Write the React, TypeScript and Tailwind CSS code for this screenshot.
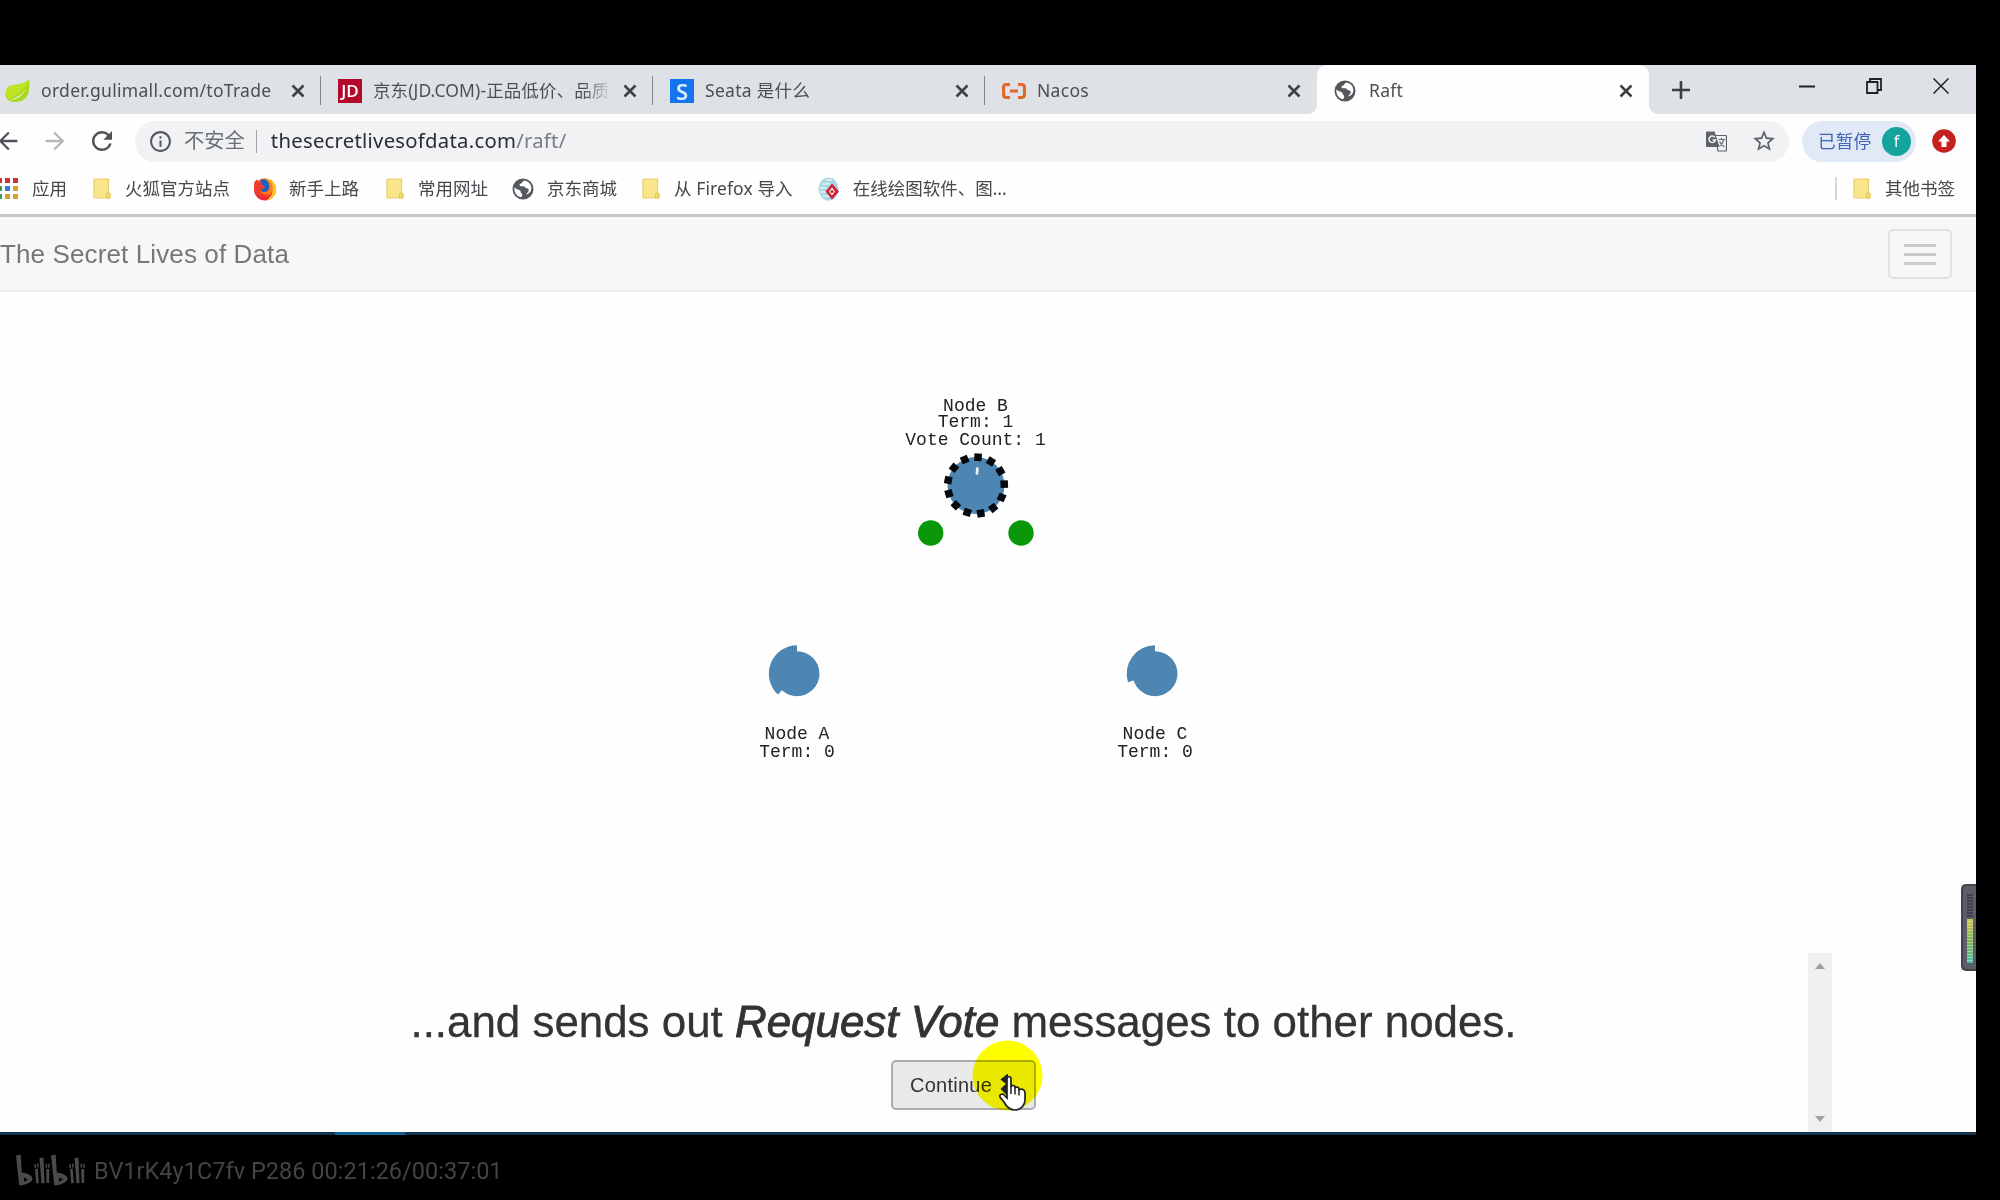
import type { ReactNode } from "react";
import { MdStarBorder, MdInfoOutline, MdArrowBack, MdArrowForward, MdRefresh } from "react-icons/md";

const CloseX = () => (
  <svg width="14" height="14" viewBox="0 0 14 14" className="shrink-0"><path d="M1.500 1.500 12.500 12.500M12.500 1.500 1.500 12.500" stroke="#3c4043" strokeWidth="2.500" /></svg>
);

const Leaf = () => (
  <svg width="25" height="25" viewBox="0 0 25 25">
    <path d="M24 0c.6 10 1.600 22-13 23C3 23.500-1 18 1 12 3 5 9 6.500 15 5c4-1 7-2.500 9-5Z" fill="#a8d820" />
    <path d="M24 0c-2 2.500-5 4-9 5C9 6.500 3 5 1 12c0 4 1 7 3 8C10 17 20 12 24 0Z" fill="#bfe424" />
    <path d="M3 21.500C10 19.500 17 16 21.500 8.500 18.500 16.500 13 20.500 3 21.500Z" fill="#e2f0b8" />
  </svg>
);

const Globe = ({ className = "" }: { className?: string }) => (
  <svg width="22" height="22" viewBox="0 0 22 22" className={`shrink-0 ${className}`}>
    <circle cx="11" cy="11" r="10.500" fill="#55595d" />
    <path d="M12.500 2.500c-2.500 1-2 2.800-4 3.200C7 6.200 7.200 8 8.800 8.200c2 .2 3.400-.4 4.200 1 .8 1.500 3.600.6 3.800 2.800.2 2-2 2.400-2.600 4.400 4-1.200 5.800-4.400 5-8C18.400 5.200 16 3 12.500 2.500Z" fill="#fff" />
    <path d="M2.400 9.500c1.800 2 3.600 1.600 5.400 2.800 1.400 1 .6 2.400 2 3.200.8.600.4 2.600-.6 3.800C5 18.500 1.800 14.500 2.400 9.500Z" fill="#fff" />
  </svg>
);

const Translate = ({ className = "" }: { className?: string }) => (
  <svg width="21" height="21" viewBox="0 0 21 21" className={className}>
    <path d="M9 4.500h10.500q1 0 1 1V19q0 1-1 1H12Z" fill="#f0f2f4" stroke="#5f6368" strokeWidth="1.200" />
    <path d="M1 .5h7.500L13.500 16H1q-1 0-1-1V1.500q0-1 1-1Z" fill="#5f6368" />
    <path d="M8.800 6.300A3.200 3.200 0 1 0 9.400 9H6.500" fill="none" stroke="#f0f2f4" strokeWidth="1.500" />
    <path d="M12.500 8.500h6.500M15.500 7v1.500M17.800 8.500q-1 4-4 6.500M13.500 10.500q2 4 5 5.500" fill="none" stroke="#6d7176" strokeWidth="1.200" />
  </svg>
);

const Folder = () => (
  <svg width="18" height="21" viewBox="0 0 18 21"><path d="M1 1h14.500v13.500l1.500 1.500v4H1Z" fill="#fbe58b" stroke="#e8cf6a" strokeWidth="1.200" /><path d="M13.500 20v-4.500l2-1 1.500 1.500v4Z" fill="#f4da6f" stroke="#e3c65b" /></svg>
);

const Firefox = () => (
  <svg width="24" height="24" viewBox="0 0 24 24">
    <circle cx="12" cy="12.500" r="11" fill="#f02a35" />
    <path d="M12 1.500c8 0 11.500 6 11 12S18 23 13 23.500c6-4 8-9 5-14-2-3-4-4-6-8Z" fill="#ffc828" />
    <path d="M7 3c5-2 9-1 12 4 2 5 0 11-5 12.500S4 18 3.500 13 4 5 7 3Z" fill="#ff7a1c" />
    <path d="M8 2.500c4-1 7 .5 8 5s-1 7.500-4.500 7.500c-3 0-4.500-1.500-4-3.500 2 .5 3.500-.5 4-2L9.500 8.500 7 6Z" fill="#1f5fc4" />
    <path d="M1.500 5C2 4 3.500 3 4 2.500c1 2 3 3 5 3l-1 3 4 1.500c-1 2-3 2.500-5 2.500 0 4 5 6 9 4-3 5-10 5-13 0-2-4-2.500-8-1.500-11.500Z" fill="#f23a2c" />
  </svg>
);

const Drawing = () => (
  <svg width="22" height="24" viewBox="0 0 22 24">
    <ellipse cx="10.500" cy="12" rx="10" ry="11.500" fill="#a9d6e3" /><path d="M4 7h8M2 11h7M2 15h7M5 19h6M8 3h6" stroke="#e4f3f7" strokeWidth="1.500" />
    <path d="m14 6.500 7 8-7 8-6.500-8Z" fill="#cf2233" /><path d="m14 10.500 3 4-3 4-3-4Z" fill="#fff" /><circle cx="14" cy="14.500" r="1.600" fill="#cf2233" />
  </svg>
);

const BiliHalf = ({ x }: { x: number }) => (
  <g transform={`translate(${x} 0)`}>
    <path fillRule="evenodd" d="M0 1.500 4.700.5 5.700 18.500C11 19 16.500 21.500 16.500 24.500 16.500 28.500 10 31 3.200 31.500ZM8 23.500v4.200l4.200-2.200Z" />
    <path d="m19 15 2.800-.5 1 14.500-2.600.5ZM23.500 4l4-.5 1 25.500-3 .5ZM30.200 15h3v14h-2.700ZM18 10.500l1.600-.4.600 3.600-1.500.3ZM21 9.800l1.500-.2.200 3.800-1.500.2ZM29.500 10l1.500-.2.200 3.800-1.500.2ZM32.300 9.800h1.500l-.2 4h-1.500Z" />
  </g>
);

function Tab({ icon, children, title, first }: { icon: ReactNode; children?: ReactNode; title?: string; first?: boolean }) {
  return (
    <div className={`relative flex h-[50px] w-[332px] shrink-0 items-center pl-[17px] pr-[16px] pt-[2px] ${first ? "-ml-[11px]" : ""}`}>
      <div className="flex w-[35px] shrink-0 items-center">{icon}</div>
      <div className="-mt-px min-w-0 flex-1 overflow-hidden whitespace-nowrap tracking-[0.3px] text-[#4b4f54]">{title}{children}</div>
      <CloseX />
    </div>
  );
}

const Sep = () => <div className="-ml-px mt-[11px] h-[29px] w-px shrink-0 bg-[#85898e]" />;

const Mark = ({ icon, text, className = "" }: { icon: ReactNode; text: string; className?: string }) => (
  <div className={`flex shrink-0 items-center ${className}`}>
    {icon}
    <span className="ml-[14px] whitespace-nowrap">{text}</span>
  </div>
);

function Graph() {
  const dashes = Array.from({ length: 13 }, (_, i) => 4 + (i * 360) / 13);
  return (
    <svg className="block" width="1976" height="661" viewBox="0 292 1976 661" fontFamily='"Liberation Mono", monospace' fontSize="18" textAnchor="middle" fill="#222">
      <circle cx="976" cy="485.500" r="28.500" fill="#4d86b3" />
      {dashes.map((a) => (
        <rect key={a} x="972.300" y="453.500" width="7.500" height="7.500" fill="#05080c" transform={`rotate(${a} 976 485.5)`} />
      ))}
      <path d="M977.500 467.500 976.800 474.500" stroke="#e9f6fb" strokeWidth="2.600" />
      <circle cx="930.700" cy="533" r="12.700" fill="#0a970a" />
      <circle cx="1021" cy="533" r="12.700" fill="#0a970a" />
      <g fill="#4d86b3">
        <circle cx="797" cy="673.700" r="22.500" />
        <path d="M797 673.700V645.200A28.500 28.500 0 0 0 778 694.600Z" />
        <circle cx="1155" cy="673.700" r="22.500" />
        <path d="M1155 673.700V645.200A28.500 28.500 0 0 0 1128 682.200Z" />
      </g>
      <text x="975.500" y="411">Node B</text>
      <text x="975.500" y="427">Term: 1</text>
      <text x="975.500" y="444.500">Vote Count: 1</text>
      <text x="797" y="739">Node A</text>
      <text x="797" y="757">Term: 0</text>
      <text x="1155" y="739">Node C</text>
      <text x="1155" y="757">Term: 0</text>
    </svg>
  );
}

const appColors = ["#c33", "#c33", "#c33", "#3a9a5b", "#3b78d8", "#d9a12c", "#3a9a5b", "#d9a12c", "#d9a12c"];

export default function App() {
  return (
    <div className="h-[1200px] w-[2000px] overflow-hidden bg-black pt-[65px] font-['Noto_Sans','Noto_Sans_CJK_SC',sans-serif]">
      <div className="relative h-[1070px] w-[1976px] overflow-hidden bg-[#fefefe]">
        <div className="flex h-[49px] bg-[#dee1e5] text-[17.500px]">
          <Tab first icon={<span className="-ml-[1px]"><Leaf /></span>} title="order.gulimall.com/toTrade" />
          <Sep />
          <Tab icon={<span className="flex h-6 w-[24px] items-center justify-center bg-[#b3092a] font-['Open_Sans'] text-[17px] font-semibold text-white">JD</span>}>
            <span className="block w-[239px] overflow-hidden bg-gradient-to-r from-[#4b4f54] from-88% to-transparent bg-clip-text tracking-[0.1px] text-transparent">京东(JD.COM)-正品低价、品质</span>
          </Tab>
          <Sep />
          <Tab icon={<span className="flex h-6 w-[24px] items-center justify-center bg-[#1673f0] text-[22px] font-semibold leading-6 text-[#d6f0ff]">S</span>} title="Seata 是什么" />
          <Sep />
          <Tab icon={<svg width="24" height="16" viewBox="0 0 24 16" fill="none" stroke="#e2692b" strokeWidth="3.200"><path d="M8 1.500H4.500Q1.500 1.500 1.500 4.500v7q0 3 3 3H8M16 1.500h3.500q3 0 3 3v7q0 3-3 3H16M8 8h8" /></svg>} title="Nacos" />
          <div className="relative h-[50px] w-[332px] shrink-0 rounded-t-[10px] bg-[#fefefe]">
            <div className="absolute -left-[10px] bottom-[1px] h-[10px] w-[10px] bg-[radial-gradient(circle_at_0_0,#dee1e5_10px,#fefefe_10.500px)]" />
            <div className="absolute -right-[10px] bottom-[1px] h-[10px] w-[10px] bg-[radial-gradient(circle_at_100%_0,#dee1e5_10px,#fefefe_10.500px)]" />
            <Tab icon={<Globe />} title="Raft" />
          </div>
          <svg className="ml-[23px] mt-[16px]" width="18" height="18" viewBox="0 0 18 18"><path d="M9 0v18M0 9h18" stroke="#3c4043" strokeWidth="2.600" /></svg>
          <svg className="ml-[109px] mt-[20px]" width="16" height="3"><path d="M0 1.500h16" stroke="#222" strokeWidth="2" /></svg>
          <svg className="ml-[51px] mt-[13px]" width="16" height="16" viewBox="0 0 16 16" fill="none" stroke="#222" strokeWidth="1.800"><path d="M1 4h10.500v11H1ZM4 4V1h11v11h-3.500" /></svg>
          <svg className="ml-[51px] mt-[13px]" width="16" height="16" viewBox="0 0 16 16"><path d="m.5.5 15 15m0-15-15 15" stroke="#222" strokeWidth="1.500" /></svg>
        </div>

        <div className="flex h-[54px] items-center">
          <MdArrowBack size={28} color="#4f5357" className="-ml-[6px]" />
          <MdArrowForward size={28} color="#b4b7ba" className="ml-[19px]" />
          <MdRefresh size={30} color="#4f5357" className="ml-[18px]" />
          <div className="ml-[18px] flex h-[41px] w-[1654px] items-center rounded-full bg-[#f0f2f4] pl-[13px] pr-[12px] text-[20.300px]">
            <MdInfoOutline size={25} color="#55595d" />
            <span className="-mt-px ml-[11px] text-[20.300px] text-[#6b6f73]">不安全</span>
            <div className="ml-[11px] h-[23px] w-px bg-[#a0a3a7]" />
            <span className="-mt-px ml-[14px] tracking-[0.260px] text-[#2a2d31]">thesecretlivesofdata.com<span className="text-[#7a7e83]">/raft/</span></span>
            <Translate className="ml-auto" />
            <MdStarBorder size={26} color="#5f6368" className="ml-[24px]" />
          </div>
          <div className="ml-[13px] flex h-[41px] w-[114px] items-center rounded-full bg-[#e1e9f6] pl-[16px] text-[17.700px] text-[#3f63b8]">
            已暂停
            <div className="ml-[11px] flex h-[29px] w-[29px] items-center justify-center rounded-full bg-[#15a3a0] text-[16px] text-white">f</div>
          </div>
          <svg className="ml-[16px]" width="24" height="24" viewBox="0 0 24 24"><circle cx="12" cy="12" r="11.800" fill="#c5221f" /><path d="m12 6 6 6.500h-3.500V18h-5v-5.500H6Z" fill="#fff" /></svg>
        </div>

        <div className="flex h-[46px] items-center pb-[5px] text-[17.500px] text-[#45484c]">
          <Mark icon={<div className="-ml-[3px] grid grid-cols-3 gap-[3px]">{appColors.map((c, i) => <div key={i} className="h-[5px] w-[5px]" style={{ background: c }} />)}</div>} text="应用" />
          <Mark className="ml-[26px]" icon={<Folder />} text="火狐官方站点" />
          <Mark className="ml-[23px]" icon={<div className="-mr-[2px]"><Firefox /></div>} text="新手上路" />
          <Mark className="ml-[27px]" icon={<Folder />} text="常用网址" />
          <Mark className="ml-[24px]" icon={<Globe className="-mr-px" />} text="京东商城" />
          <Mark className="ml-[25px] tracking-[0.100px]" icon={<Folder />} text="从 Firefox 导入" />
          <Mark className="ml-[25px]" icon={<div className="-mr-px"><Drawing /></div>} text="在线绘图软件、图..." />
          <div className="ml-auto h-[23px] w-[2px] bg-[#d5d7d9]" />
          <Mark className="ml-[16px] mr-[21px]" icon={<Folder />} text="其他书签" />
        </div>

        <div className="flex h-[78px] items-center border-b-2 border-t-[3px] border-b-[#ececec] border-t-[#c6c6c6] bg-[#f7f7f7] font-['Liberation_Sans']">
          <span className="mt-px whitespace-nowrap text-[26px] tracking-[0.120px] text-[#777]">The Secret Lives of Data</span>
          <div className="ml-auto mr-[24px] mt-px flex h-[50px] w-[64px] flex-col items-center justify-center gap-[6px] rounded-[5px] border-2 border-[#e2e2e2]">
            <div className="h-[3px] w-8 bg-[#cbcbcb]" /><div className="h-[3px] w-8 bg-[#cbcbcb]" /><div className="h-[3px] w-8 bg-[#cbcbcb]" />
          </div>
        </div>

        <Graph />

        <div className="flex h-[179px] font-['Liberation_Sans'] text-[#333]">
          <div className="flex w-[1808px] flex-col items-center pl-[119px] pt-[44px]">
            <div className="whitespace-nowrap text-[43.900px] leading-[50px] [-webkit-text-stroke:0.300px_#333]">...and sends out <em className="[-webkit-text-stroke:0.900px_#333]">Request Vote</em> messages to other nodes.</div>
            <div className="mt-[13px] flex h-[50px] w-[145px] items-center rounded-[5px] border-2 border-[#adadad] bg-[#e9e9e9] pl-[17px] text-[20px] tracking-[0.250px]">Continue</div>
          </div>
          <div className="flex w-6 flex-col items-center justify-between bg-[#f0f0f0] py-[10px]">
            <div className="h-0 w-0 border-x-[5px] border-b-[6px] border-x-transparent border-b-[#a0a0a0]" />
            <div className="h-0 w-0 border-x-[5px] border-t-[6px] border-x-transparent border-t-[#a0a0a0]" />
          </div>
        </div>
        <div className="absolute inset-x-0 bottom-0 h-[3px] bg-[#12344a]"><div className="ml-[335px] h-full w-[70px] bg-[#12609a]" /></div>

        <svg className="absolute left-[970px] top-[973px] mix-blend-multiply" width="76" height="76"><circle cx="37.500" cy="37.500" r="35" fill="#ff0" /></svg>
        <svg className="absolute left-[997px] top-[1009px]" width="32" height="38" viewBox="0 0 32 38">
          <path d="M10 1.500 5 5.500l5 4ZM10 10l-5 5 5 5Z" fill="#222" stroke="#222" strokeWidth="2" />
          <path d="M10 5c0-3 4-3 4 0v7c3-1.500 4 0 4 1.500 3-1 4 0 4 2 3-1 6 0 6 3.500v7c0 5-4 10-10 10-6 0-9-4-11-8l-4-5c-1-3 3-4 5-1l2 2Z" fill="#fff" stroke="#222" strokeWidth="1.700" /><path d="M14 12v8M18 13.500v7M22 15.500v6" stroke="#222" strokeWidth="1.500" />
        </svg>
        <div className="absolute right-0 top-[819px] flex h-[87px] w-[15px] flex-col items-center gap-[1px] rounded-l-[5px] border-2 border-r-0 border-[#41444d] bg-[#5b5e69] pt-[8px]">
          <div className="h-[24px] w-[6px] bg-[repeating-linear-gradient(#3d4049_0_2px,#5b5e69_2px_3px)]" />
          <div className="h-[44px] w-[6px] bg-[repeating-linear-gradient(transparent_0_2px,#e9edc080_2px_3px),linear-gradient(#d4c450,#7db158,#4cc0a8)]" />
        </div>
      </div>

      <div className="flex h-[65px] items-center pl-[16px] pt-[5px] font-['Roboto'] text-[23.500px] text-[#444]">
        <svg width="69" height="32" viewBox="0 0 69 32" fill="#4a4a4a"><BiliHalf x={0} /><BiliHalf x={35} /></svg>
        <span className="ml-[9px] mt-[3px] whitespace-nowrap tracking-[0.020px]">BV1rK4y1C7fv P286 00:21:26/00:37:01</span>
      </div>
    </div>
  );
}
